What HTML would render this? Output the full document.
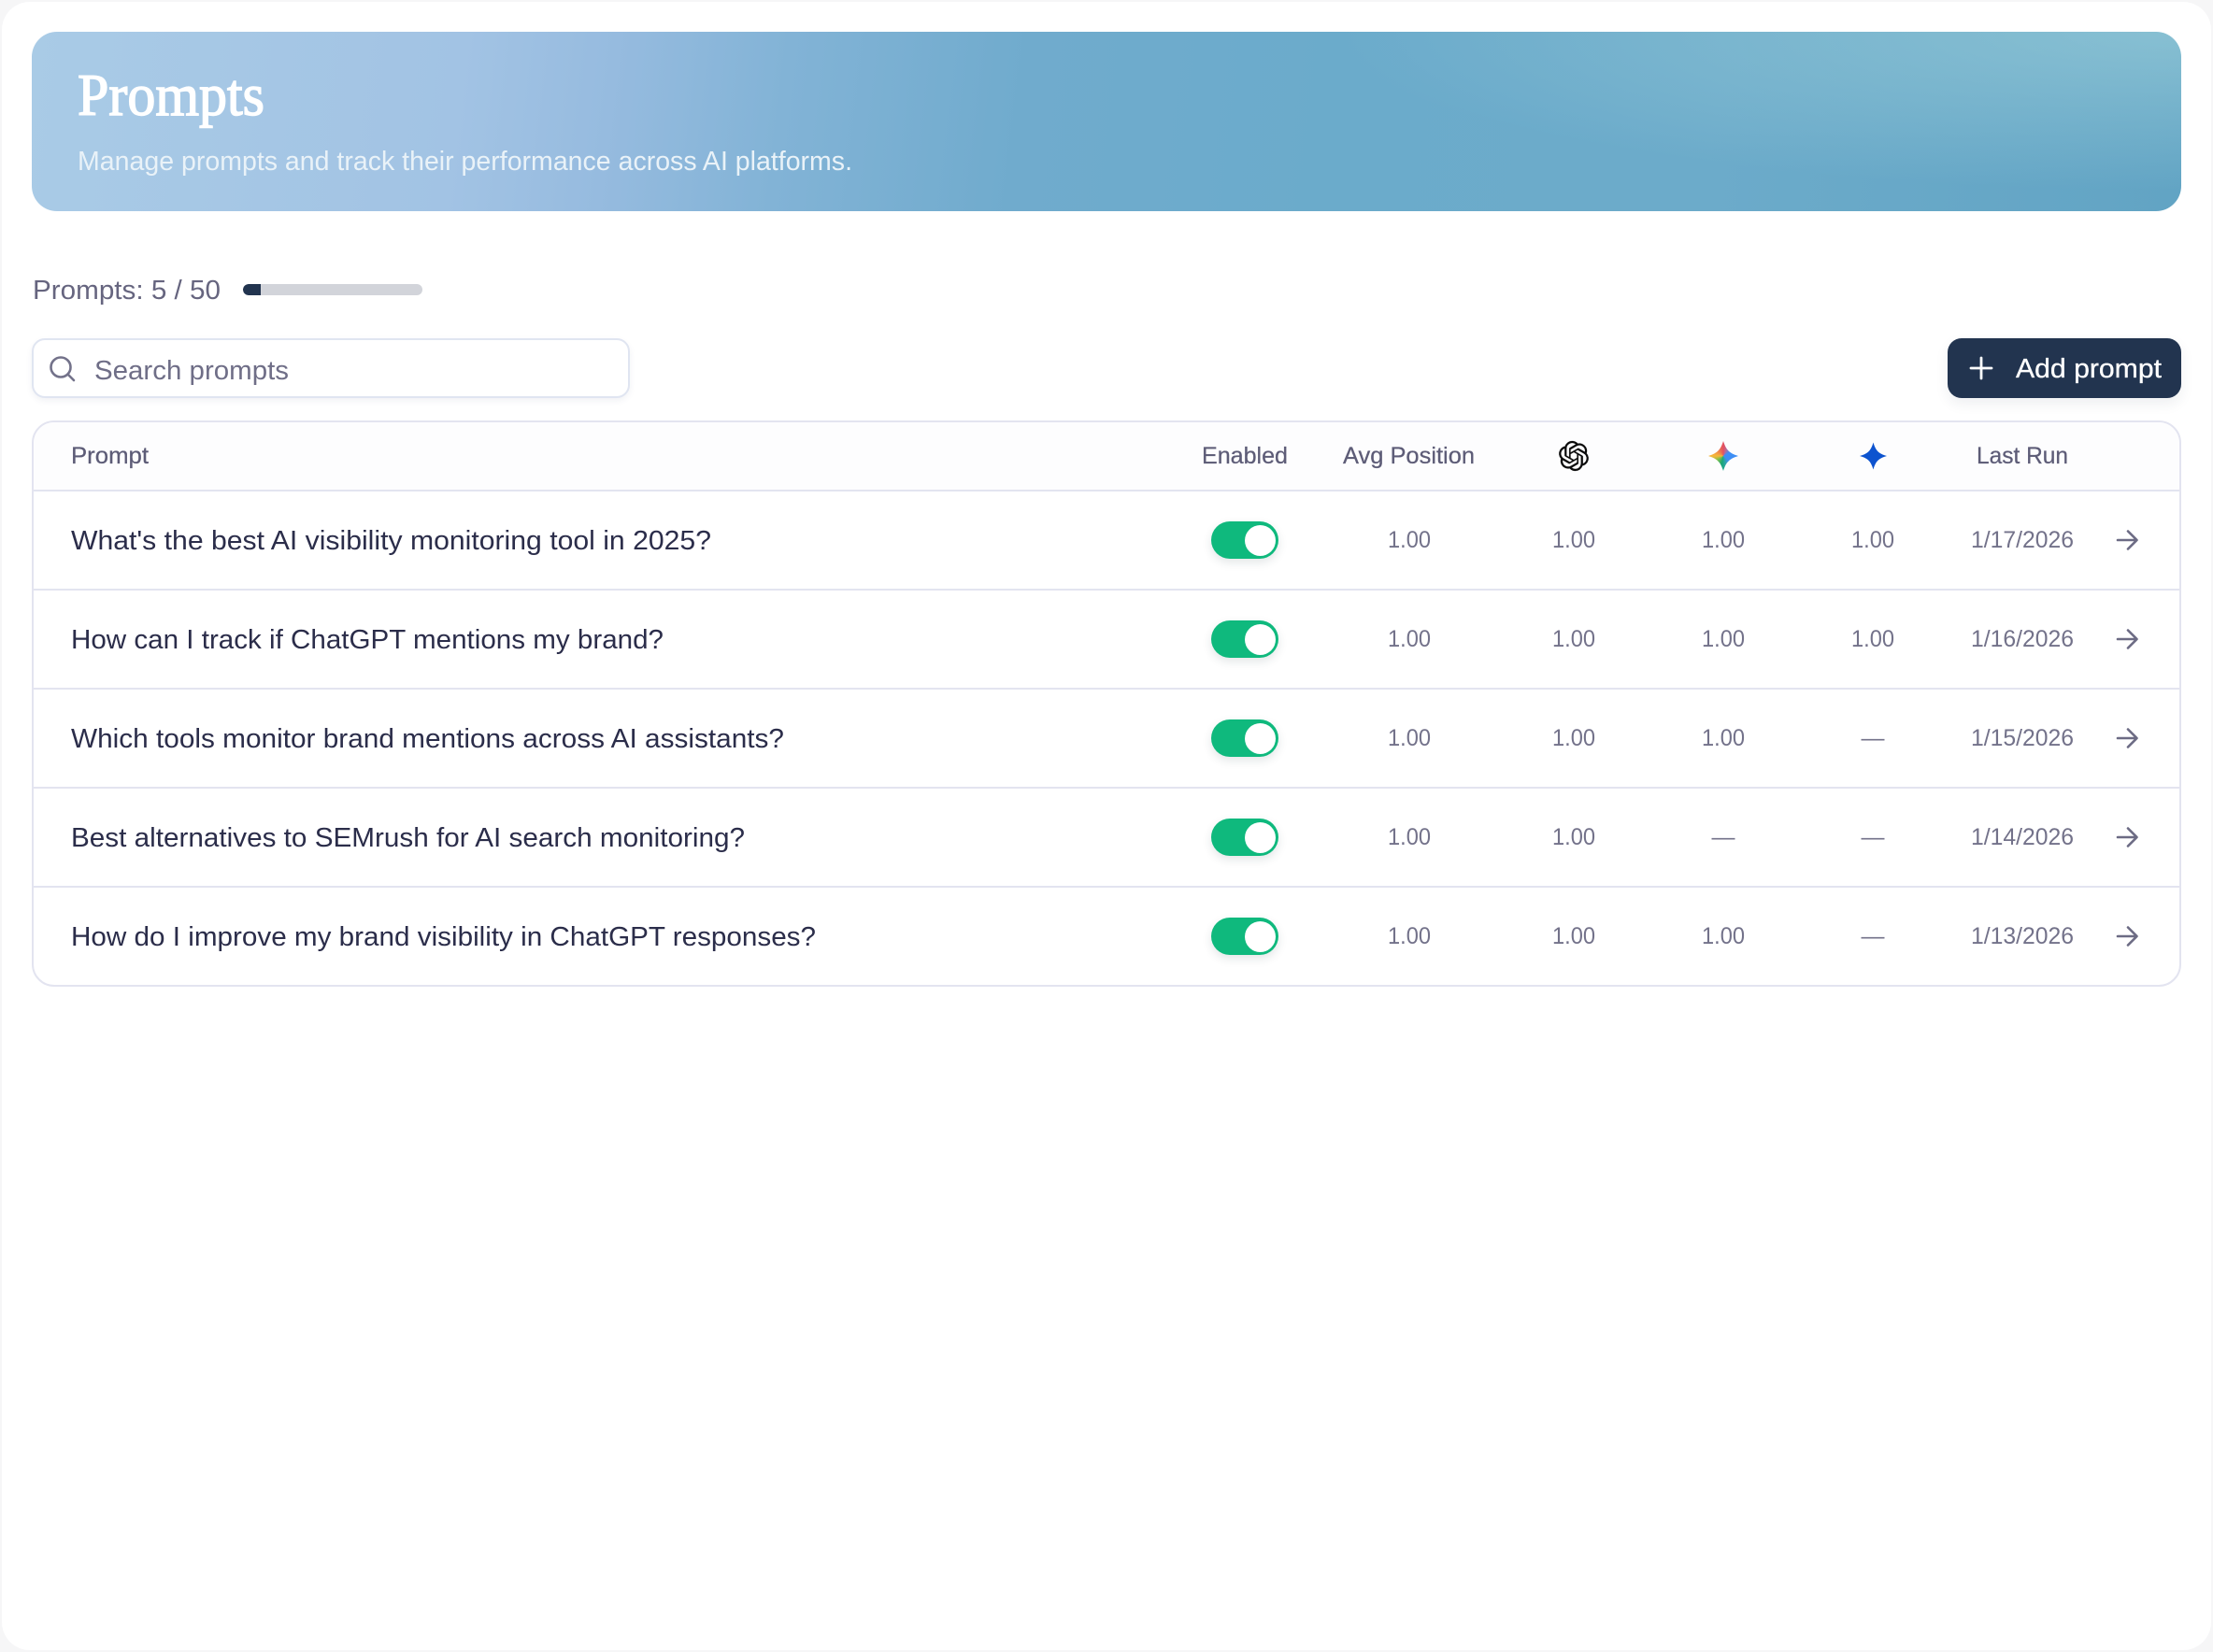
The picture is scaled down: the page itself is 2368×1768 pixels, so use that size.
<!DOCTYPE html>
<html lang="en"><head><meta charset="utf-8"><title>Prompts</title>
<style>
html,body{margin:0;padding:0;width:2368px;height:1768px;overflow:hidden;background:#f6f6f7}
.abs{position:absolute;box-sizing:border-box}
#page{left:2px;top:2px;width:2364px;height:1764px;background:#fff;border-radius:30px}
#banner{left:34px;top:34px;width:2300px;height:192px;border-radius:27px;background:radial-gradient(ellipse 900px 170px at 100% 0%,rgba(160,210,220,.6),rgba(160,210,220,0) 100%),linear-gradient(97deg,#a9cbe6 0%,#a2c3e4 20%,#96bbdf 27%,#82b3d6 35%,#70abcd 46%,#6babcb 60%,#6cabca 78%,#62a4c4 100%)}
#track{left:260px;top:304px;width:192px;height:12px;border-radius:6px;background:#d2d4da;overflow:hidden}
#fill{left:0;top:0;width:19px;height:12px;background:#22344f;border-radius:6px 0 0 6px}
#search{left:34px;top:362px;width:640px;height:64px;border:2px solid #e0e5f1;border-radius:14px;background:#fff;box-shadow:0 3px 7px rgba(60,70,110,.07)}
#btn{left:2084px;top:362px;width:250px;height:64px;border-radius:15px;background:#22344f;box-shadow:0 6px 14px rgba(34,52,79,.08)}
#card{left:34px;top:450px;width:2300px;height:606px;border:2px solid #e3e4f0;border-radius:24px;background:#fff;overflow:hidden}
#head{left:0;top:0;width:2296px;height:74px;background:#fdfdfe;border-bottom:2px solid #e3e4f0}
.line{left:0;width:2296px;height:2px;background:#e3e4f0}
.tg{left:1296px;width:72px;height:40px;border-radius:20px;background:#0fb97d;box-shadow:0 4px 10px rgba(40,60,70,.13)}
.tg i{position:absolute;left:36px;top:3.500px;width:33px;height:33px;border-radius:50%;background:#fff}
#gem{left:1828px;top:472px;width:32px;height:32px;background:conic-gradient(from 0deg,#e5505f 0deg,#b56a9a 25deg,#3e8ff6 60deg,#3f8ef2 130deg,#2aa79a 170deg,#17a57a 190deg,#7fc04a 235deg,#f6b83a 270deg,#ef8a48 310deg,#e5505f 360deg);clip-path:path('M16 0C19 9.5 22.5 13 32 16C22.5 19 19 22.5 16 32C13 22.5 9.5 19 0 16C9.5 13 13 9.5 16 0Z')}
svg.o{position:absolute;left:0;top:0}
text{font-family:"Liberation Sans",sans-serif}
.h{font-size:25px;fill:#5d5c77;stroke:#5d5c77;stroke-width:.25px}
.r{font-size:28.5px;fill:#2b2d4a}
.v{font-size:25px;fill:#73728a}
</style></head><body>
<div class="abs" id="page"></div>
<div class="abs" id="banner"></div>
<div class="abs" id="track"><div class="abs" id="fill"></div></div>
<div class="abs" id="search"></div>
<div class="abs" id="btn"></div>
<div class="abs" id="card"><div class="abs" id="head"></div>
<div class="abs line" style="top:178px"></div><div class="abs line" style="top:284px"></div><div class="abs line" style="top:390px"></div><div class="abs line" style="top:496px"></div></div>
<div class="abs tg" style="top:558px"><i></i></div>
<div class="abs tg" style="top:664px"><i></i></div>
<div class="abs tg" style="top:770px"><i></i></div>
<div class="abs tg" style="top:876px"><i></i></div>
<div class="abs tg" style="top:982px"><i></i></div>
<div class="abs" id="gem"></div>
<svg class="o" width="2368" height="1768" viewBox="0 0 2368 1768" xmlns="http://www.w3.org/2000/svg">
<defs>
<g id="ar" fill="none" stroke="#6c6b84" stroke-width="2.6" stroke-linecap="round" stroke-linejoin="round"><path d="M-10 0H10M1 -9.5L10.5 0L1 9.5"/></g>
</defs>
<text x="83" y="123" font-size="64" textLength="200" lengthAdjust="spacingAndGlyphs" style="font-family:'Liberation Serif',serif" fill="#fff" stroke="#fff" stroke-width="1.5">Prompts</text>
<text x="83" y="182" font-size="28.5" textLength="829" lengthAdjust="spacingAndGlyphs" fill="#e9f2f8">Manage prompts and track their performance across AI platforms.</text>
<text x="35" y="320" font-size="28.5" textLength="201" lengthAdjust="spacingAndGlyphs" fill="#66657f">Prompts: 5 / 50</text>
<circle cx="65" cy="393" r="10.5" fill="none" stroke="#73728a" stroke-width="2.6"/><path d="M73 401L79 407" stroke="#73728a" stroke-width="2.6" stroke-linecap="round"/>
<text x="101" y="406" font-size="28.5" textLength="208" lengthAdjust="spacingAndGlyphs" fill="#6f6e87">Search prompts</text>
<path d="M2120 383V405M2109 394H2131" stroke="#fff" stroke-width="2.8" stroke-linecap="round"/>
<text x="2157" y="404" font-size="28.5" textLength="156" lengthAdjust="spacingAndGlyphs" fill="#fff" stroke="#fff" stroke-width=".3">Add prompt</text>

<text class="h" x="76" y="496" textLength="83" lengthAdjust="spacingAndGlyphs">Prompt</text>
<text class="h" x="1286" y="496" textLength="92" lengthAdjust="spacingAndGlyphs">Enabled</text>
<text class="h" x="1437" y="496" textLength="141" lengthAdjust="spacingAndGlyphs">Avg Position</text>
<text class="h" x="2115" y="496" textLength="98" lengthAdjust="spacingAndGlyphs">Last Run</text>
<g transform="translate(1668 472) scale(1.3333)"><path fill="#0b0b0b" stroke="#0b0b0b" stroke-width=".15" d="M22.2819 9.8211a5.9847 5.9847 0 0 0-.5157-4.9108 6.0462 6.0462 0 0 0-6.5098-2.9A6.0651 6.0651 0 0 0 4.9807 4.1818a5.9847 5.9847 0 0 0-3.9977 2.9 6.0462 6.0462 0 0 0 .7427 7.0966 5.98 5.98 0 0 0 .511 4.9107 6.051 6.051 0 0 0 6.5146 2.9001A5.9847 5.9847 0 0 0 13.2599 24a6.0557 6.0557 0 0 0 5.7718-4.2058 5.9894 5.9894 0 0 0 3.9977-2.9001 6.0557 6.0557 0 0 0-.7475-7.0729zm-9.022 12.6081a4.4755 4.4755 0 0 1-2.8764-1.0408l.1419-.0804 4.7783-2.7582a.7948.7948 0 0 0 .3927-.6813v-6.7369l2.02 1.1686a.071.071 0 0 1 .038.052v5.5826a4.504 4.504 0 0 1-4.4945 4.4944zm-9.6607-4.1254a4.4708 4.4708 0 0 1-.5346-3.0137l.142.0852 4.783 2.7582a.7712.7712 0 0 0 .7806 0l5.8428-3.3685v2.3324a.0804.0804 0 0 1-.0332.0615L9.74 19.9502a4.4992 4.4992 0 0 1-6.1408-1.6464zM2.3408 7.8956a4.485 4.485 0 0 1 2.3655-1.9728V11.6a.7664.7664 0 0 0 .3879.6765l5.8144 3.3543-2.0201 1.1685a.0757.0757 0 0 1-.071 0l-4.8303-2.7865A4.504 4.504 0 0 1 2.3408 7.872zm16.5963 3.8558L13.1038 8.364 15.1192 7.2a.0757.0757 0 0 1 .071 0l4.8303 2.7913a4.4944 4.4944 0 0 1-.6765 8.1042v-5.6772a.79.79 0 0 0-.407-.667zm2.0107-3.0231l-.142-.0852-4.7735-2.7818a.7759.7759 0 0 0-.7854 0L9.409 9.2297V6.8974a.0662.0662 0 0 1 .0284-.0615l4.8303-2.7866a4.4992 4.4992 0 0 1 6.6802 4.66zM8.3065 12.863l-2.02-1.1638a.0804.0804 0 0 1-.038-.0567V6.0742a4.4992 4.4992 0 0 1 7.3757-3.4537l-.142.0805L8.704 5.459a.7948.7948 0 0 0-.3927.6813zm1.0976-2.3654l2.602-1.4998 2.6069 1.4998v2.9994l-2.5974 1.4997-2.6067-1.4997Z"/></g>
<path fill="#0d53cf" d="M2004.5 473.5C2007.1 482.4 2010.1 485.4 2019 488C2010.1 490.6 2007.1 493.6 2004.5 502.5C2001.9 493.6 1998.9 490.6 1990 488C1998.9 485.4 2001.9 482.4 2004.5 473.5Z"/>

<text class="r" x="76" y="588" textLength="685" lengthAdjust="spacingAndGlyphs">What's the best AI visibility monitoring tool in 2025?</text>
<text class="r" x="76" y="694" textLength="634" lengthAdjust="spacingAndGlyphs">How can I track if ChatGPT mentions my brand?</text>
<text class="r" x="76" y="800" textLength="763" lengthAdjust="spacingAndGlyphs">Which tools monitor brand mentions across AI assistants?</text>
<text class="r" x="76" y="906" textLength="721" lengthAdjust="spacingAndGlyphs">Best alternatives to SEMrush for AI search monitoring?</text>
<text class="r" x="76" y="1012" textLength="797" lengthAdjust="spacingAndGlyphs">How do I improve my brand visibility in ChatGPT responses?</text>

<text class="v" x="1485" y="586" textLength="46" lengthAdjust="spacingAndGlyphs">1.00</text><text class="v" x="1661" y="586" textLength="46" lengthAdjust="spacingAndGlyphs">1.00</text><text class="v" x="1821" y="586" textLength="46" lengthAdjust="spacingAndGlyphs">1.00</text><text class="v" x="1981" y="586" textLength="46" lengthAdjust="spacingAndGlyphs">1.00</text><text class="v" x="2109" y="586" textLength="110" lengthAdjust="spacingAndGlyphs">1/17/2026</text>
<text class="v" x="1485" y="692" textLength="46" lengthAdjust="spacingAndGlyphs">1.00</text><text class="v" x="1661" y="692" textLength="46" lengthAdjust="spacingAndGlyphs">1.00</text><text class="v" x="1821" y="692" textLength="46" lengthAdjust="spacingAndGlyphs">1.00</text><text class="v" x="1981" y="692" textLength="46" lengthAdjust="spacingAndGlyphs">1.00</text><text class="v" x="2109" y="692" textLength="110" lengthAdjust="spacingAndGlyphs">1/16/2026</text>
<text class="v" x="1485" y="798" textLength="46" lengthAdjust="spacingAndGlyphs">1.00</text><text class="v" x="1661" y="798" textLength="46" lengthAdjust="spacingAndGlyphs">1.00</text><text class="v" x="1821" y="798" textLength="46" lengthAdjust="spacingAndGlyphs">1.00</text><text class="v" x="1991.5" y="798">—</text><text class="v" x="2109" y="798" textLength="110" lengthAdjust="spacingAndGlyphs">1/15/2026</text>
<text class="v" x="1485" y="904" textLength="46" lengthAdjust="spacingAndGlyphs">1.00</text><text class="v" x="1661" y="904" textLength="46" lengthAdjust="spacingAndGlyphs">1.00</text><text class="v" x="1831.5" y="904">—</text><text class="v" x="1991.5" y="904">—</text><text class="v" x="2109" y="904" textLength="110" lengthAdjust="spacingAndGlyphs">1/14/2026</text>
<text class="v" x="1485" y="1010" textLength="46" lengthAdjust="spacingAndGlyphs">1.00</text><text class="v" x="1661" y="1010" textLength="46" lengthAdjust="spacingAndGlyphs">1.00</text><text class="v" x="1821" y="1010" textLength="46" lengthAdjust="spacingAndGlyphs">1.00</text><text class="v" x="1991.5" y="1010">—</text><text class="v" x="2109" y="1010" textLength="110" lengthAdjust="spacingAndGlyphs">1/13/2026</text>

<use href="#ar" x="2276" y="578"/><use href="#ar" x="2276" y="684"/><use href="#ar" x="2276" y="790"/><use href="#ar" x="2276" y="896"/><use href="#ar" x="2276" y="1002"/>
</svg>
</body></html>
